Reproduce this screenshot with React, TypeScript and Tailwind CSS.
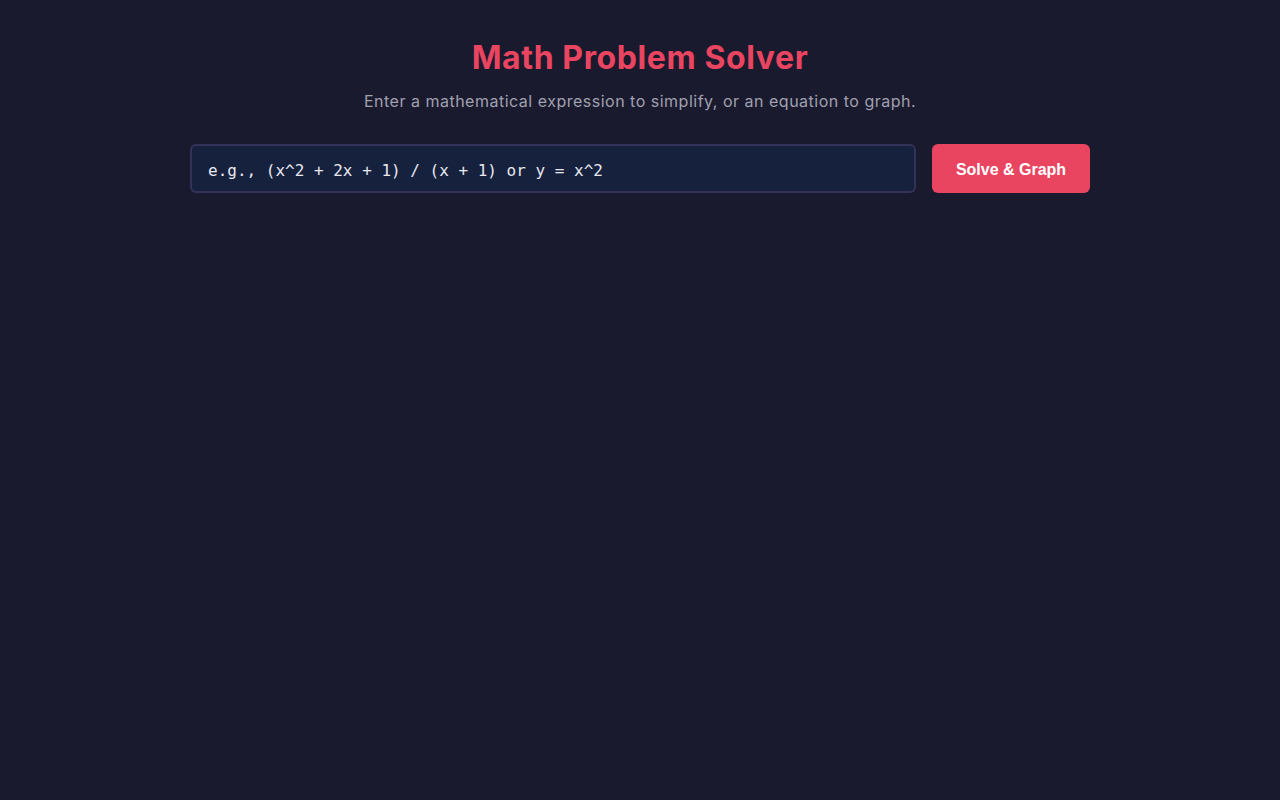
export default function App() {
  return (
    <div className="min-h-screen bg-[#1a1a2e] pt-[34px]" style={{ fontFamily: '"Inter", "Liberation Sans", sans-serif' }}>
      <div className="mx-auto w-[900px]">
        <h1 className="text-center text-[32px] leading-[48px] font-bold text-[#e94560] tracking-[0.6px]">
          Math Problem Solver
        </h1>
        <p className="mt-[7px] text-center text-[16px] leading-6 tracking-[0.5px] text-[#a0a0b0]">
          Enter a mathematical expression to simplify, or an equation to graph.
        </p>
        <div className="mt-[31px] flex gap-4">
          <input
            type="text"
            placeholder="e.g., (x^2 + 2x + 1) / (x + 1) or y = x^2"
            className="h-[49px] flex-1 rounded-md border-2 border-[#33335a] bg-[#16213e] px-4 pt-[3px] text-[16px] text-[#e0e0e0] placeholder:text-[#e8e8f0] outline-none"
            style={{ fontFamily: '"DejaVu Sans Mono", "Liberation Mono", monospace' }}
          />
          <button
            className="h-[49px] w-[158px] rounded-md bg-[#e94560] pt-[2px] text-[16px] font-bold text-white"
            style={{ fontFamily: '"Liberation Sans", Arial, sans-serif' }}
          >
            Solve &amp; Graph
          </button>
        </div>
      </div>
    </div>
  );
}
